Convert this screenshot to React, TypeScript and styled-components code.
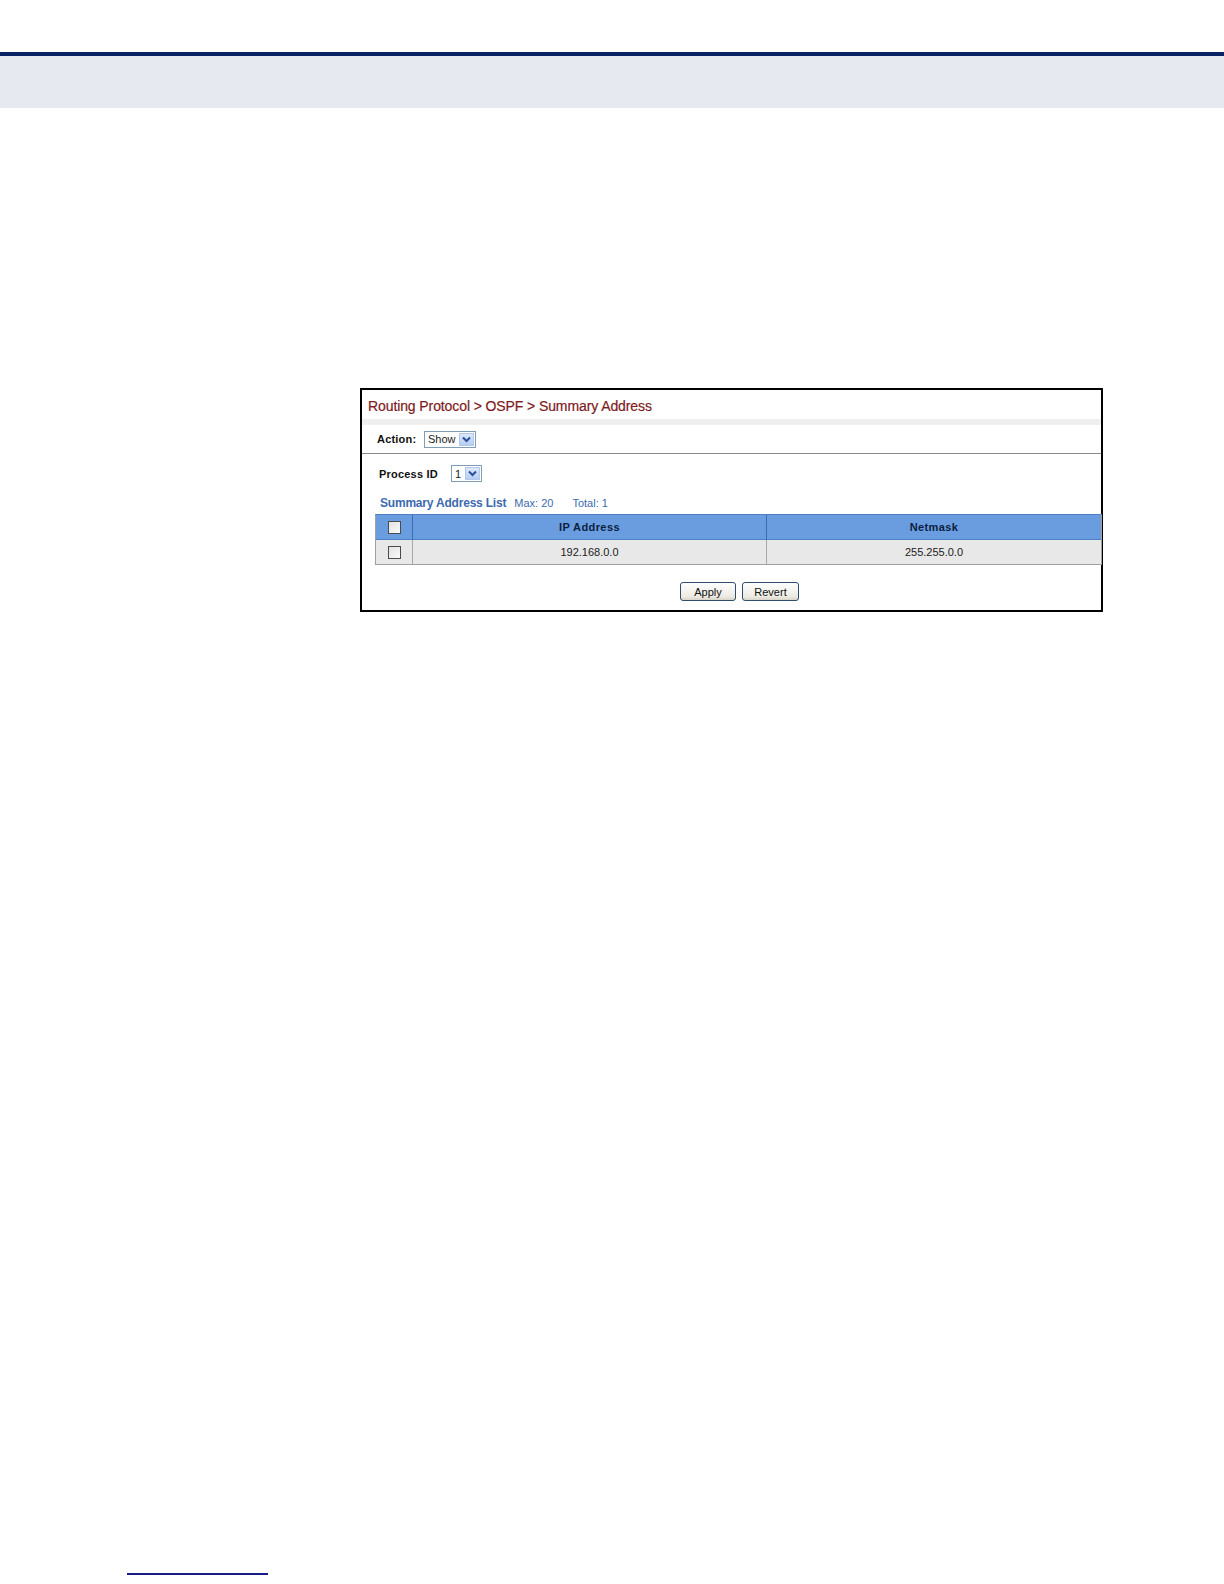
import React from "react";
import styled, { createGlobalStyle } from "styled-components";

const GlobalStyle = createGlobalStyle`
  html, body {
    margin: 0;
    padding: 0;
    background: #ffffff;
  }
  body {
    font-family: "Liberation Sans", Arial, sans-serif;
  }
`;

const Page = styled.div`
  width: 1224px;
  height: 1584px;
  display: flex;
  flex-direction: column;
  background: #fff;
`;

const TopRule = styled.div`
  margin-top: 52px;
  height: 4px;
  background: #0b2363;
`;

const HeaderBand = styled.div`
  height: 52px;
  background: #e6e9f0;
`;

const Body = styled.div`
  flex: 1;
  padding: 280px 0 0 360px;
`;

const Frame = styled.div`
  width: 739px;
  height: 220px;
  border: 2px solid #000;
  background: #fff;
  display: flex;
  flex-direction: column;
`;

const Title = styled.div`
  height: 35px;
  padding: 8px 0 0 6px;
  box-sizing: border-box;
  font-size: 14px;
  color: #7d1b22;
  letter-spacing: -0.1px;
  -webkit-text-stroke: 0.2px #7d1b22;
  border-bottom: 6px solid transparent;
  border-image: linear-gradient(to bottom, #f2f2f2, #d8d8d8, #f0f0f0) 1;
`;

const ActionRow = styled.div`
  display: flex;
  align-items: center;
  height: 29px;
  padding-left: 15px;
  border-bottom: 1px solid #8a8a8a;
  box-sizing: border-box;
`;

const Label = styled.span<{ $width: number }>`
  width: ${(p) => p.$width}px;
  font-size: 11px;
  font-weight: bold;
  color: #111;
  letter-spacing: 0.2px;
`;

const Select = styled.div<{ $width: number }>`
  width: ${(p) => p.$width}px;
  height: 17px;
  border: 1px solid #7f9db9;
  box-sizing: border-box;
  display: flex;
  align-items: center;
  justify-content: space-between;
  font-size: 11px;
  color: #222;
  padding-left: 3px;
  background: #fff;
`;

const Arrow = styled.span`
  width: 15px;
  height: 13px;
  margin-right: 1px;
  background: linear-gradient(to bottom, #dce8fb, #b5cdf4);
  border: 1px solid #b4c8ea;
  box-sizing: border-box;
  display: flex;
  align-items: center;
  justify-content: center;
`;

const ProcessRow = styled.div`
  display: flex;
  align-items: center;
  height: 17px;
  margin-top: 11px;
  padding-left: 17px;
`;

const ListHeader = styled.div`
  display: flex;
  align-items: baseline;
  margin-top: 14px;
  padding-left: 18px;
  height: 16px;
`;

const ListTitle = styled.span`
  font-size: 12px;
  font-weight: bold;
  color: #3d6aae;
  margin-right: 8px;
  letter-spacing: -0.2px;
`;

const ListMeta = styled.span<{ $gap: number }>`
  font-size: 11px;
  color: #3d6aae;
  margin-right: ${(p) => p.$gap}px;
`;

const Table = styled.div`
  margin: 2px 0 0 13px;
  width: 725px;
  border: 1px solid #a0a0a0;
  border-top-color: #4f7fc6;
  display: grid;
  grid-template-columns: 36px 354px 1fr;
`;

const Cell = styled.div<{ $head?: boolean; $first?: boolean }>`
  height: 24px;
  display: flex;
  align-items: center;
  justify-content: center;
  font-size: 11px;
  font-weight: ${(p) => (p.$head ? "bold" : "normal")};
  color: ${(p) => (p.$head ? "#0c1f3f" : "#222")};
  background: ${(p) => (p.$head ? "#6a9de0" : "#e8e8e8")};
  border-left: ${(p) => (p.$first ? "none" : "1px solid")};
  border-left-color: ${(p) => (p.$head ? "#3c6cb8" : "#a8a8a8")};
  border-bottom: ${(p) => (p.$head ? "1px solid #4f7fc6" : "none")};
  letter-spacing: ${(p) => (p.$head ? "0.4px" : "0")};
`;

const Check = styled.span`
  width: 13px;
  height: 13px;
  border: 1px solid #4b4b4b;
  box-sizing: border-box;
  background: linear-gradient(135deg, #e2e2e2, #fafafa);
`;

const Buttons = styled.div`
  display: flex;
  justify-content: center;
  gap: 6px;
  margin-top: 17px;
  padding-left: 16px;
`;

const Button = styled.div<{ $width: number }>`
  width: ${(p) => p.$width}px;
  height: 19px;
  border: 1px solid #2f4d6d;
  border-radius: 3px;
  box-sizing: border-box;
  background: linear-gradient(to bottom, #ffffff, #eceae2 80%, #d8d4c8);
  font-size: 11px;
  color: #111;
  display: flex;
  align-items: center;
  justify-content: center;
`;

const FooterRule = styled.div`
  margin: 0 0 9px 127px;
  width: 141px;
  height: 2px;
  background: #1a1a8a;
`;

function Chevron() {
  return (
    <svg width="9" height="7" viewBox="0 0 9 7">
      <path d="M1 1.5 L4.5 5 L8 1.5" fill="none" stroke="#2a4f9a" strokeWidth="2" />
    </svg>
  );
}

export default function App() {
  return (
    <Page>
      <GlobalStyle />
      <TopRule />
      <HeaderBand />
      <Body>
        <Frame>
          <Title>Routing Protocol &gt; OSPF &gt; Summary Address</Title>
          <ActionRow>
            <Label $width={47}>Action:</Label>
            <Select $width={52}>
              Show
              <Arrow>
                <Chevron />
              </Arrow>
            </Select>
          </ActionRow>
          <ProcessRow>
            <Label $width={72}>Process ID</Label>
            <Select $width={31}>
              1
              <Arrow>
                <Chevron />
              </Arrow>
            </Select>
          </ProcessRow>
          <ListHeader>
            <ListTitle>Summary Address List</ListTitle>
            <ListMeta $gap={19}>Max: 20</ListMeta>
            <ListMeta $gap={0}>Total: 1</ListMeta>
          </ListHeader>
          <Table>
            <Cell $head $first>
              <Check />
            </Cell>
            <Cell $head>IP Address</Cell>
            <Cell $head>Netmask</Cell>
            <Cell $first>
              <Check />
            </Cell>
            <Cell>192.168.0.0</Cell>
            <Cell>255.255.0.0</Cell>
          </Table>
          <Buttons>
            <Button $width={56}>Apply</Button>
            <Button $width={57}>Revert</Button>
          </Buttons>
        </Frame>
      </Body>
      <FooterRule />
    </Page>
  );
}
